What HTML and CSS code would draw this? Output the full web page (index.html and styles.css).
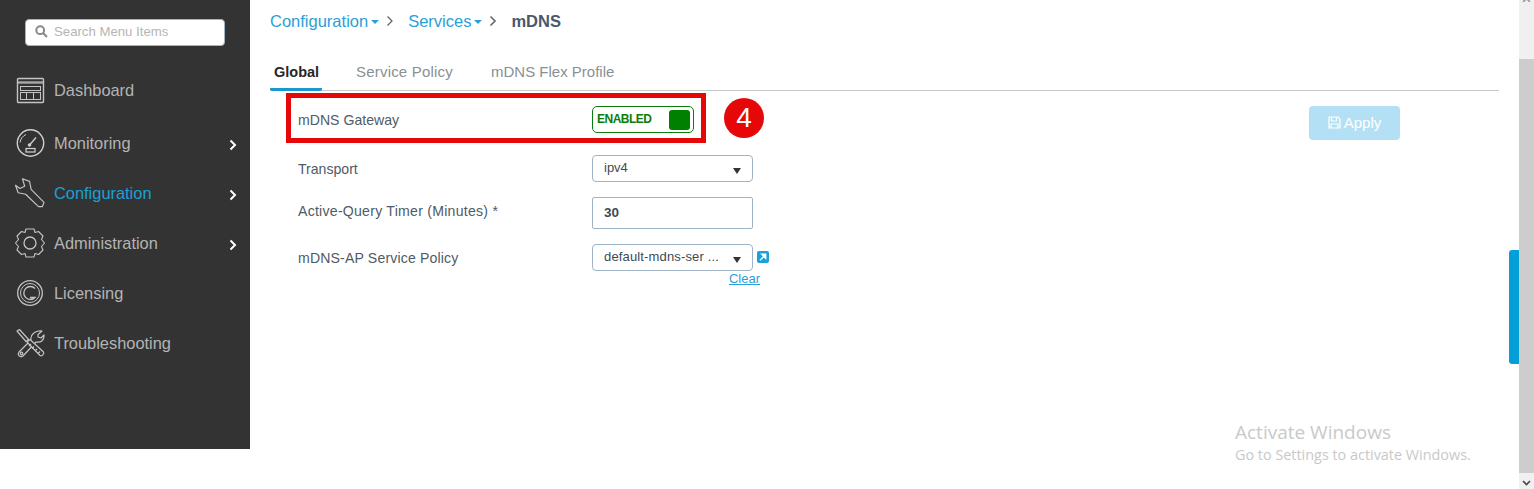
FILE: index.html
```html
<!DOCTYPE html>
<html lang="en">
<head>
  <meta charset="UTF-8" />
  <title>mDNS</title>
  <link rel="stylesheet" href="styles.css">
</head>
<body>
  <div class="page">
    <!-- Left menu -->
    <aside class="sidebar">
      <div class="search-box">
        <svg class="search-icon" width="13" height="13" viewBox="0 0 13 13"><circle cx="5.2" cy="5.2" r="3.9" fill="none" stroke="#8a8a8a" stroke-width="2"/><path d="M8 8l4 4" stroke="#8a8a8a" stroke-width="2.2"/></svg>
        <span>Search Menu Items</span>
      </div>
      <nav class="menu">
        <div class="menu-item first">
          <svg class="menu-icon" width="30" height="30" viewBox="0 -1 30 30" fill="none" stroke="#c4c4c4"><rect x="2.5" y="2.500" width="26" height="24" rx="1" stroke-width="1.4"/><path d="M3 6.500h25" stroke-width="2.400" stroke="#aaa"/><rect x="5.5" y="10.500" width="20" height="4"/><rect x="5.5" y="16.500" width="20" height="7"/><path d="M11.500 17v6M18.500 17v6"/></svg>
          <span>Dashboard</span>
        </div>
        <div class="menu-item">
          <svg class="menu-icon" width="30" height="30" viewBox="0 0 30 30" fill="none" stroke="#d0d0d0"><circle cx="15.500" cy="15" r="13.200" stroke-width="1.400"/><path d="M5 14.500a10.500 10.500 0 0 1 6-8" stroke-width="1"/><path d="M15 16.500l6-7" stroke-width="1.300"/><circle cx="14.500" cy="17" r="1.300" fill="#d0d0d0"/><rect x="11" y="20.500" width="9" height="3.500" stroke-width="1.200"/></svg>
          <span>Monitoring</span>
          <svg class="chevron" width="8" height="12" viewBox="0 0 8 12"><path d="M1.500 1.500L6 6l-4.500 4.500" fill="none" stroke="#fff" stroke-width="2"/></svg>
        </div>
        <div class="menu-item active">
          <svg class="menu-icon" width="30" height="32" viewBox="0 0 31 32" fill="none" stroke="#c4c4c4" stroke-width="1.200" stroke-linejoin="round"><path d="M7.700 1.300L15 4l1.700 8.300L30 25.700 28.300 30h-4L11 17.300l-7.700-1.600L.5 8 5 11.300 10 9z"/></svg>
          <span>Configuration</span>
          <svg class="chevron" width="8" height="12" viewBox="0 0 8 12"><path d="M1.500 1.500L6 6l-4.500 4.500" fill="none" stroke="#fff" stroke-width="2"/></svg>
        </div>
        <div class="menu-item">
          <svg class="menu-icon" width="30" height="30" viewBox="0 0 30 30" fill="none" stroke="#c4c4c4" stroke-width="1.100" stroke-linejoin="round"><path d="M11 1h8l1 3.500 3.500-1 4.500 4.500-1.500 3.500 3 3.500-3 3.500 1.500 3.500-4.500 4.500-3.500-1-1 3.500h-8l-1-3.500-3.500 1L2 22l1.500-3.500-3-3.500 3-3.500L2 8l4.500-4.500 3.500 1z"/><circle cx="15" cy="15" r="6" stroke-width="1.300"/></svg>
          <span>Administration</span>
          <svg class="chevron" width="8" height="12" viewBox="0 0 8 12"><path d="M1.500 1.500L6 6l-4.500 4.500" fill="none" stroke="#fff" stroke-width="2"/></svg>
        </div>
        <div class="menu-item">
          <svg class="menu-icon" width="30" height="30" viewBox="0 0 30 30" fill="none" stroke="#c4c4c4"><circle cx="15" cy="15" r="12.300" stroke-width="1.300"/><circle cx="15" cy="15" r="9.500" stroke-width="1"/><path d="M20 10.500a6.500 6.500 0 1 0 0 9H15" stroke-width="1.300"/></svg>
          <span>Licensing</span>
        </div>
        <div class="menu-item">
          <svg class="menu-icon" width="30" height="30" viewBox="0 0 30 30" fill="none" stroke="#c4c4c4" stroke-width="1.200" stroke-linejoin="round"><path d="M27 3l-4 3.500V9l3 1 3-3c.5 5-3 8-8 7L8 28c-3 2-6-1-4-4L16 12c-1-5 4-10 11-9z" fill="#333"/><circle cx="6.500" cy="25.500" r="1.300"/><path d="M2 3l2.500-1.500 9 10-2.500 2z" fill="#333"/><path d="M12 14l3-2.500L28.500 24c1 2-1.500 4.500-3.500 3.500z" fill="#333"/><path d="M16 16l-2 2M19 18.500l-2 2M22 21l-2 2M25 23.500l-2 2"/></svg>
          <span>Troubleshooting</span>
        </div>
      </nav>
    </aside>

    <!-- Main content -->
    <main class="content">
      <div class="breadcrumb">
        <a class="crumb">Configuration<i class="caret"></i></a>
        <svg class="crumb-sep" width="8" height="12" viewBox="0 0 8 12"><path d="M1.500 1.500L6 6l-4.500 4.500" fill="none" stroke="#666" stroke-width="1.300"/></svg>
        <a class="crumb">Services<i class="caret"></i></a>
        <svg class="crumb-sep" width="8" height="12" viewBox="0 0 8 12"><path d="M1.500 1.500L6 6l-4.500 4.500" fill="none" stroke="#666" stroke-width="1.600"/></svg>
        <strong class="crumb-current">mDNS</strong>
      </div>

      <div class="tabs">
        <div class="tab selected">Global</div>
        <div class="tab">Service Policy</div>
        <div class="tab tab-flex">mDNS Flex Profile</div>
      </div>

      <div class="panel">
        <div class="form">
          <div class="highlight-row">
            <div class="highlight">
              <label class="field-label">mDNS Gateway</label>
              <div class="toggle"><span>ENABLED</span><i class="toggle-knob"></i></div>
            </div>
            <div class="step-badge">4</div>
          </div>
          <div class="form-row row-transport">
            <label class="field-label">Transport</label>
            <div class="select">ipv4<i class="select-arrow"></i></div>
          </div>
          <div class="form-row row-timer">
            <label class="field-label">Active-Query Timer (Minutes) *</label>
            <div class="text-input">30</div>
          </div>
          <div class="form-row row-policy">
            <label class="field-label">mDNS-AP Service Policy</label>
            <div class="policy-field">
              <div class="policy-top">
                <div class="select select-long"><span>default-mdns-ser ...</span><i class="select-arrow"></i></div>
                <svg class="open-link" width="12" height="12" viewBox="0 0 12 12"><rect width="12" height="12" rx="2" fill="#1ba0d7"/><path d="M3 9.200l4-4M4.800 3.300h3.900v3.900z" stroke="#fff" fill="#fff" stroke-width="1.400"/></svg>
              </div>
              <a class="clear-link">Clear</a>
            </div>
          </div>
        </div>
        <button class="apply-btn">
          <svg width="13" height="13" viewBox="0 0 13 13" fill="none" stroke="#fff" stroke-width="1.200"><path d="M1 1h9l2 2v9H1z"/><path d="M3.500 1v4h5V1M3 12V8h7v4"/></svg>
          Apply
        </button>
      </div>
    </main>

    <div class="side-tab"></div>

    <div class="scrollbar">
      <svg class="scroll-arrow arrow-top" width="15" height="2" viewBox="0 4 15 2"><path d="M4 6l3.500-3.500L11 6" fill="none" stroke="#999" stroke-width="1.600"/></svg>
      <div class="scroll-thumb"></div>
      <svg class="scroll-arrow arrow-bottom" width="15" height="8" viewBox="0 0 15 8"><path d="M4 2l3.500 3.500L11 2" fill="none" stroke="#444" stroke-width="1.600"/></svg>
    </div>

    <div class="watermark">
      <div class="watermark-title">Activate Windows</div>
      <div>Go to Settings to activate Windows.</div>
    </div>
  </div>
</body>
</html>
```

FILE: styles.css
```css
* {
  box-sizing: border-box;
}
html, body {
  height: 100%;
}
body {
  margin: 0;
  overflow: hidden;
  background: #fff;
  font-family: "Liberation Sans", Arial, sans-serif;
}
.page {
  position: relative;
  display: flex;
  height: 489px;
}

/* sidebar */
.sidebar {
  width: 250px;
  height: 449px;
  flex-shrink: 0;
  background: #333;
  padding: 19px 25px 0 0;
}
.search-box {
  display: flex;
  align-items: center;
  gap: 6px;
  width: 200px;
  height: 27px;
  margin-left: 25px;
  padding-left: 9px;
  padding-bottom: 2px;
  background: #fff;
  border: 1px solid #9fb4c4;
  border-radius: 4px;
  font-size: 13.200px;
  color: #b5b5b5;
}
.menu {
  margin-top: 19px;
}
.menu-item {
  position: relative;
  display: flex;
  align-items: center;
  height: 50px;
  padding-left: 15px;
  font-size: 16.400px;
  color: #b4b4b4;
}
.menu-item.first {
  margin-bottom: 3px;
}
.menu-icon {
  flex-shrink: 0;
  margin-right: 9px;
}
.menu-item.active span {
  color: #1ba0d7;
}
.chevron {
  position: absolute;
  left: 229px;
  top: 21px;
}

/* main */
.content {
  width: 1269px;
  flex-shrink: 0;
  padding: 11px 20px 0 20px;
}
.breadcrumb {
  display: flex;
  align-items: center;
  height: 20px;
  font-size: 16.500px;
}
.crumb {
  color: #2a9fd8;
}
.caret {
  display: inline-block;
  margin-left: 3px;
  vertical-align: 3px;
  border-top: 4px solid #2a9fd8;
  border-left: 4px solid transparent;
  border-right: 4px solid transparent;
}
.crumb-sep {
  margin: 0 14px 0 7px;
}
.crumb-current {
  color: #49586a;
  font-size: 16.500px;
}
.tabs {
  display: flex;
  height: 39px;
  margin-top: 21px;
  border-bottom: 1px solid #c8c8c8;
}
.tab {
  height: 39px;
  padding: 11px 4px 0;
  margin-right: 30px;
  font-size: 15px;
  letter-spacing: 0.200px;
  color: #8a8f94;
}
.tab-flex {
  letter-spacing: 0;
}
.tab.selected {
  width: 52px;
  margin-right: 30px;
  padding-top: 12px;
  font-size: 14.500px;
  letter-spacing: 0;
  color: #262626;
  font-weight: bold;
  border-bottom: 3px solid #1b96d1;
  border-radius: 2px;
}
.panel {
  display: flex;
  justify-content: space-between;
  padding-right: 99px;
}
.form {
  width: 520px;
}
.highlight-row {
  display: flex;
  align-items: center;
  gap: 18px;
  margin: 2px 0 0 16px;
}
.highlight {
  display: flex;
  align-items: center;
  justify-content: space-between;
  width: 420px;
  height: 50px;
  padding: 0 7px 0 7px;
  border: 5px solid #e60808;
  background: #fff;
}
.highlight .field-label {
  margin-top: 3px;
}
.field-label {
  font-size: 14.100px;
  color: #4f5b66;
}
.toggle {
  display: flex;
  align-items: center;
  justify-content: space-between;
  width: 102px;
  height: 27px;
  margin-top: 3px;
  padding: 0 3px 0 4px;
  border: 1px solid #0a7d0a;
  border-radius: 5px;
  font-size: 12px;
  font-weight: bold;
  color: #0a7d0a;
}
.toggle span {
  letter-spacing: -0.500px;
  margin-top: -2px;
}
.toggle-knob {
  width: 21px;
  height: 20px;
  background: #008000;
  border-radius: 3px;
}
.step-badge {
  display: flex;
  align-items: center;
  justify-content: center;
  width: 40px;
  height: 40px;
  border-radius: 50%;
  background: #e60808;
  color: #fff;
  font-size: 28px;
}
.form-row {
  display: flex;
  align-items: flex-start;
  padding-left: 28px;
}
.form-row .field-label {
  width: 294px;
  flex-shrink: 0;
  padding-top: 6px;
}
.row-transport {
  margin-top: 12px;
}
.row-timer {
  margin-top: 15px;
}
.row-timer .field-label {
  letter-spacing: 0.250px;
}
.row-policy {
  margin-top: 15px;
}
.row-policy .field-label {
  letter-spacing: 0.150px;
}
.select {
  position: relative;
  width: 161px;
  height: 27px;
  padding: 4px 11px;
  border: 1px solid #9fb4c4;
  border-radius: 4px;
  font-size: 13px;
  color: #3f4a54;
  background: #fff;
}
.select-arrow {
  position: absolute;
  right: 11px;
  top: 12px;
  border-top: 6px solid #333;
  border-left: 4px solid transparent;
  border-right: 4px solid transparent;
}
.text-input {
  width: 161px;
  height: 32px;
  padding: 7px 11px;
  border: 1px solid #9fb4c4;
  border-radius: 2px;
  font-size: 13.500px;
  font-weight: bold;
  color: #3f4a54;
}
.policy-top {
  display: flex;
  gap: 4px;
}
.select-long {
  letter-spacing: 0.150px;
}
.open-link {
  margin-top: 7px;
}
.clear-link {
  display: block;
  width: 168px;
  text-align: right;
  font-size: 13px;
  color: #2a9fd8;
  text-decoration: underline;
}
.apply-btn {
  display: flex;
  align-items: center;
  justify-content: center;
  gap: 3px;
  width: 91px;
  height: 34px;
  margin-top: 15px;
  padding-bottom: 3px;
  background: #b3e0f4;
  border: none;
  border-radius: 4px;
  color: #fff;
  font-family: inherit;
  font-size: 15px;
}

/* things on top */
.side-tab {
  position: absolute;
  left: 1509px;
  top: 250px;
  width: 10px;
  height: 114px;
  background: #049fd9;
  border-radius: 3px 0 0 3px;
}
.scrollbar {
  width: 15px;
  height: 489px;
  flex-shrink: 0;
  background: #f0f0f0;
}
.scroll-thumb {
  height: 414px;
  margin-top: 57px;
  background: #cdcdcd;
}
.scroll-arrow {
  display: block;
}
.arrow-bottom {
  margin-top: 6px;
}
.watermark {
  position: absolute;
  left: 1235px;
  top: 420px;
  font-family: "Open Sans", sans-serif;
  font-size: 14.400px;
  color: #c9c9c9;
}
.watermark-title {
  font-size: 19px;
  line-height: 25px;
}
```
